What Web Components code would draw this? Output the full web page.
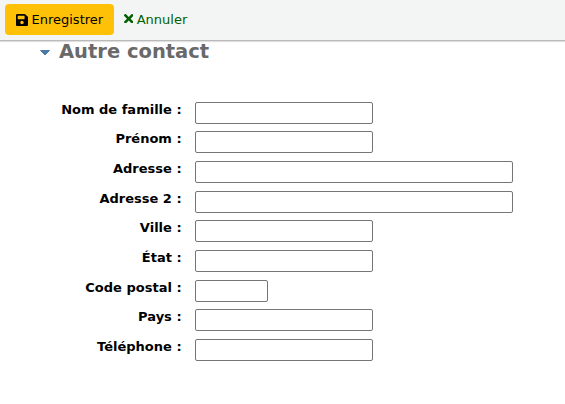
<!DOCTYPE html>
<html>
<head>
<meta charset="utf-8">
<style>
  html, body { margin: 0; padding: 0; background: #fff; overflow: hidden; height: 404px; }
  body { font-family: "DejaVu Sans", sans-serif; font-size: 13px; color: #000; }
</style>
</head>
<body>
<koha-toolbar>
  <koha-button icon="save">Enregistrer</koha-button>
  <koha-link>Annuler</koha-link>
</koha-toolbar>
<koha-section heading="Autre contact">
  <koha-field label="Nom de famille :" size="m"></koha-field>
  <koha-field label="Prénom :" size="m"></koha-field>
  <koha-field label="Adresse :" size="l"></koha-field>
  <koha-field label="Adresse 2 :" size="l"></koha-field>
  <koha-field label="Ville :" size="m"></koha-field>
  <koha-field label="État :" size="m"></koha-field>
  <koha-field label="Code postal :" size="s"></koha-field>
  <koha-field label="Pays :" size="m"></koha-field>
  <koha-field label="Téléphone :" size="m"></koha-field>
</koha-section>
<script>
class KohaToolbar extends HTMLElement {
  constructor() {
    super();
    this.attachShadow({ mode: 'open' });
    this.shadowRoot.innerHTML = `
      <style>
        :host {
          display: flex;
          align-items: center;
          gap: 10px;
          box-sizing: border-box;
          height: 41px;
          padding: 4px 5px 5px;
          background: #f3f4f4;
          border-bottom: 1px solid #b9b9b9;
          box-shadow: 0 1px 1px rgba(0, 0, 0, 0.12);
        }
      </style>
      <slot></slot>
    `;
  }
}

class KohaButton extends HTMLElement {
  constructor() {
    super();
    this.attachShadow({ mode: 'open' });
    this.shadowRoot.innerHTML = `
      <style>
        :host {
          display: inline-flex;
          align-items: center;
          gap: 4px;
          box-sizing: border-box;
          height: 31px;
          padding: 0 10.500px 0 10.500px;
          background: #ffc107;
          border-radius: 4px;
          color: #000;
          font-size: 13px;
        }
        svg { width: 12px; height: 12px; display: block; }
      </style>
      <svg viewBox="0 32 448 448"><path fill="#000" d="M433.941 129.941l-83.882-83.882A48 48 0 0 0 316.118 32H48C21.490 32 0 53.490 0 80v352c0 26.510 21.490 48 48 48h352c26.510 0 48-21.490 48-48V163.882a48 48 0 0 0-14.059-33.941zM224 416c-35.346 0-64-28.654-64-64 0-35.346 28.654-64 64-64s64 28.654 64 64c0 35.346-28.654 64-64 64zm96-304.520V212c0 6.627-5.373 12-12 12H76c-6.627 0-12-5.373-12-12V108c0-6.627 5.373-12 12-12h228.520c3.183 0 6.235 1.264 8.485 3.515l3.480 3.480A11.996 11.996 0 0 1 320 111.480z"/></svg>
      <span><slot></slot></span>
    `;
  }
}

class KohaLink extends HTMLElement {
  constructor() {
    super();
    this.attachShadow({ mode: 'open' });
    this.shadowRoot.innerHTML = `
      <style>
        :host {
          display: inline-flex;
          align-items: center;
          gap: 3.500px;
          color: #006100;
          font-size: 13px;
        }
        svg { width: 9.500px; height: 9.500px; display: block; margin-top: -2px; }
      </style>
      <svg viewBox="0 80 352 352"><path fill="#006100" d="M242.720 256l100.070-100.070c12.280-12.280 12.280-32.190 0-44.480l-22.240-22.240c-12.280-12.280-32.190-12.280-44.480 0L176 189.280 75.930 89.210c-12.280-12.280-32.190-12.280-44.480 0L9.210 111.450c-12.280 12.280-12.280 32.190 0 44.480L109.280 256 9.210 356.070c-12.280 12.280-12.280 32.190 0 44.480l22.240 22.240c12.280 12.280 32.200 12.280 44.480 0L176 322.720l100.070 100.070c12.280 12.280 32.200 12.280 44.480 0l22.240-22.240c12.280-12.280 12.280-32.190 0-44.480L242.720 256z"/></svg>
      <span><slot></slot></span>
    `;
  }
}

class KohaSection extends HTMLElement {
  constructor() {
    super();
    this.attachShadow({ mode: 'open' });
    this.shadowRoot.innerHTML = `
      <style>
        :host { display: block; }
        h3 {
          display: flex;
          align-items: center;
          gap: 8px;
          margin: 0;
          padding: 0 0 0 39px;
          height: 21px;
          color: #696969;
          font-size: 19.500px;
          font-weight: bold;
          line-height: 21px;
        }
        svg { width: 12px; height: 7px; display: block; margin-top: 2px; }
        .fields {
          display: flex;
          flex-direction: column;
          gap: 7.650px;
          margin-top: 39.800px;
        }
      </style>
      <h3>
        <svg viewBox="0 0 12 7"><path fill="#4a7ba8" stroke="#4a7ba8" stroke-linejoin="round" d="M1.500 1.500h9L6 6z"/></svg>
        <span class="title"></span>
      </h3>
      <div class="fields"><slot></slot></div>
    `;
    this.shadowRoot.querySelector('.title').textContent = this.getAttribute('heading');
  }
}

class KohaField extends HTMLElement {
  constructor() {
    super();
    this.attachShadow({ mode: 'open' });
    this.shadowRoot.innerHTML = `
      <style>
        :host {
          display: flex;
          align-items: flex-start;
          height: 22px;
        }
        label {
          width: 181.600px;
          text-align: right;
          font-weight: bold;
          font-size: 13px;
          line-height: 15px;
          flex: none;
        }
        input {
          box-sizing: border-box;
          display: block;
          height: 22px;
          margin: 0 0 0 13.400px;
          padding: 0 4px;
          background: #fff;
          border: 1px solid #767676;
          border-radius: 2px;
          font: inherit;
        }
        input.s { width: 73px; }
        input.m { width: 178px; }
        input.l { width: 318px; }
      </style>
      <label></label>
      <input type="text">
    `;
    this.shadowRoot.querySelector('label').textContent = this.getAttribute('label');
    this.shadowRoot.querySelector('input').className = this.getAttribute('size');
  }
}

customElements.define('koha-toolbar', KohaToolbar);
customElements.define('koha-button', KohaButton);
customElements.define('koha-link', KohaLink);
customElements.define('koha-section', KohaSection);
customElements.define('koha-field', KohaField);
</script>
</body>
</html>
